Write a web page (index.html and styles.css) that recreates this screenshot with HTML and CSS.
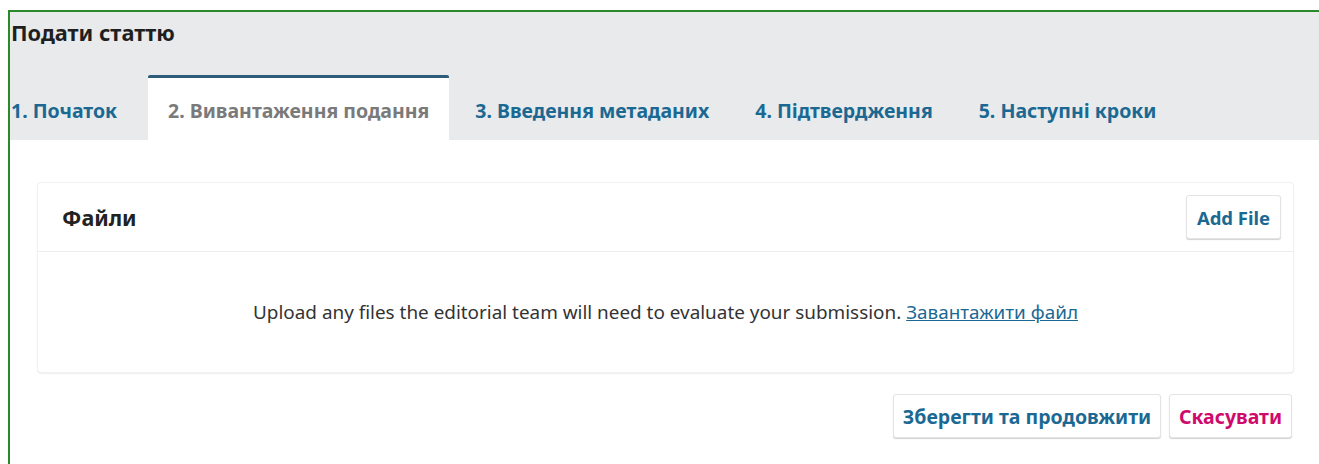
FILE: index.html
```html
<!DOCTYPE html>
<html lang="uk">
<head>
<meta charset="utf-8">
<title>Подати статтю</title>
<link rel="stylesheet" href="styles.css">
</head>
<body>
<div class="frame">
  <header class="page-header">
    <h1 class="page-title">Подати статтю</h1>
    <nav class="tabs">
      <a class="tab first" href="#">1. Початок</a>
      <a class="tab active" href="#">2. Вивантаження подання</a>
      <a class="tab" href="#">3. Введення метаданих</a>
      <a class="tab" href="#">4. Підтвердження</a>
      <a class="tab" href="#">5. Наступні кроки</a>
    </nav>
  </header>
  <main class="content">
    <section class="grid-card">
      <div class="grid-head">
        <h2 class="grid-title">Файли</h2>
        <button class="btn btn-add" type="button">Add File</button>
      </div>
      <div class="grid-body">
        <p class="empty">Upload any files the editorial team will need to evaluate your submission. <a href="#" class="link">Завантажити файл</a></p>
      </div>
    </section>
    <div class="actions">
      <button class="btn btn-save" type="button">Зберегти та продовжити</button>
      <button class="btn btn-cancel" type="button">Скасувати</button>
    </div>
  </main>
</div>
</body>
</html>
```

FILE: styles.css
```css
html, body {
  margin: 0;
  padding: 0;
  background: #ffffff;
}

body {
  font-family: "Noto Sans", "Open Sans", sans-serif;
  color: #222222;
  overflow: hidden;
}

.frame {
  margin: 10px 0 0 8px;
  border-top: 2px solid #2a8a2a;
  border-left: 2px solid #2a8a2a;
  min-height: 460px;
}

.page-header {
  background: #e8eaeb;
}

.page-title {
  margin: 0;
  height: 63px;
  box-sizing: border-box;
  padding: 6px 0 0 1px;
  font-size: 21.8px;
  font-weight: 700;
  color: #1f1f1f;
  line-height: 30px;
}

.tabs {
  display: flex;
  align-items: stretch;
  height: 65px;
  gap: 6px;
}

.tab {
  display: flex;
  align-items: center;
  padding: 3px 20px 0;
  font-size: 19.5px;
  font-weight: 700;
  color: #1b6993;
  text-decoration: none;
  border-top: 3px solid transparent;
  border-radius: 2px 2px 0 0;
}

.tab.first {
  padding-left: 1px;
  padding-right: 25px;
}

.tab.active {
  background: #ffffff;
  color: #7a7a7a;
  border-top-color: #2d5d79;
}

.content {
  padding: 43px 26px 0 28px;
}

.grid-card {
  background: #ffffff;
  border-radius: 3px;
  box-shadow: 0 0 0 1px #f1f1f1, 0 1px 2px rgba(0, 0, 0, 0.22);
}

.grid-head {
  display: flex;
  align-items: center;
  justify-content: space-between;
  height: 69px;
  padding: 0 12px 0 24px;
  border-bottom: 1px solid #eeeeee;
  box-sizing: border-box;
}

.grid-title {
  margin: 0;
  font-size: 21.5px;
  font-weight: 700;
  color: #222222;
}

.btn {
  font-family: inherit;
  font-weight: 700;
  background: #ffffff;
  border: 1px solid #e4e4e4;
  border-radius: 3px;
  box-shadow: 0 1px 1px rgba(0, 0, 0, 0.18);
  height: 44px;
  padding: 0 8px;
  cursor: pointer;
}

.btn-add {
  font-size: 18.5px;
  color: #1b6993;
  width: 95px;
}

.grid-body {
  height: 120px;
  display: flex;
  align-items: center;
  justify-content: center;
}

.empty {
  margin: 0;
  font-size: 18.9px;
  color: #333333;
}

.link {
  color: #1b6993;
  text-decoration: underline;
}

.actions {
  display: flex;
  justify-content: flex-end;
  gap: 8px;
  margin-top: 22px;
  padding-right: 1px;
}

.btn-save {
  font-size: 19.5px;
  color: #1b6993;
  width: 268px;
}

.btn-cancel {
  font-size: 19.5px;
  color: #d00a6c;
  width: 123px;
}
```
